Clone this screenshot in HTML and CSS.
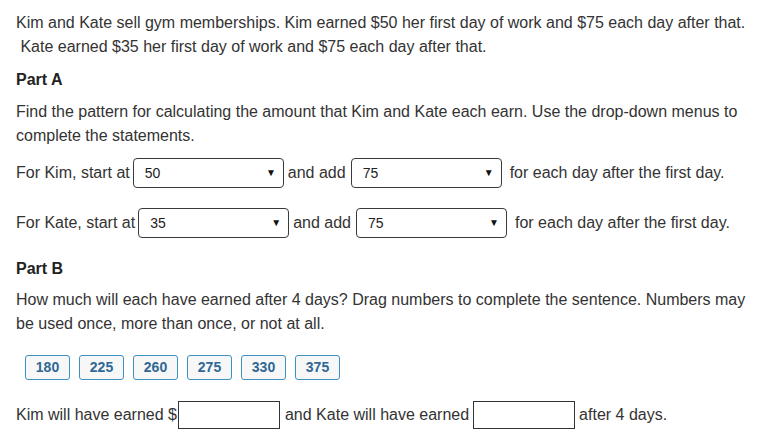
FILE: index.html
```html
<!DOCTYPE html>
<html>
<head>
<meta charset="utf-8">
<link rel="stylesheet" href="styles.css">
</head>
<body>
<div class="page">
  <p class="intro">Kim and Kate sell gym memberships. Kim earned $50 her first day of work and $75 each day after that. &nbsp;Kate earned $35 her first day of work and $75 each day after that.</p>
  <h2 class="part part-a">Part A</h2>
  <p class="para">Find the pattern for calculating the amount that Kim and Kate each earn. Use the drop-down menus to complete the statements.</p>
  <div class="row row-kim">
    <span>For Kim, start at</span>
    <div class="dropdown"><span class="val">50</span><span class="arrow">&#9660;</span></div>
    <span>and add</span>
    <div class="dropdown dd-second"><span class="val">75</span><span class="arrow">&#9660;</span></div>
    <span class="tail">for each day after the first day.</span>
  </div>
  <div class="row row-kate">
    <span>For Kate, start at</span>
    <div class="dropdown"><span class="val">35</span><span class="arrow">&#9660;</span></div>
    <span>and add</span>
    <div class="dropdown dd-second"><span class="val">75</span><span class="arrow">&#9660;</span></div>
    <span class="tail">for each day after the first day.</span>
  </div>
  <h2 class="part part-b">Part B</h2>
  <p class="para para-b">How much will each have earned after 4 days? Drag numbers to complete the sentence. Numbers may be used once, more than once, or not at all.</p>
  <div class="tiles">
    <div class="tile">180</div>
    <div class="tile">225</div>
    <div class="tile">260</div>
    <div class="tile">275</div>
    <div class="tile">330</div>
    <div class="tile">375</div>
  </div>
  <div class="row row-answer">
    <span>Kim will have earned $</span>
    <div class="blank blank-kim"></div>
    <span>and Kate will have earned</span>
    <div class="blank blank-kate"></div>
    <span>after 4 days.</span>
  </div>
</div>
</body>
</html>
```
FILE: styles.css
```css
html, body {
  margin: 0;
  padding: 0;
  background: #ffffff;
}
body {
  font-family: "Liberation Sans", Arial, sans-serif;
  font-size: 16px;
  line-height: 24px;
  color: #333333;
}
.page {
  padding: 11px 6px 0 16px;
}
.intro {
  margin: 0;
}
.part {
  margin: 9px 0 0 0;
  font-size: 16px;
  line-height: 24px;
  font-weight: bold;
  color: #222222;
}
.para {
  margin: 8px 0 0 0;
}
.para-b {
  margin-top: 7px;
}
.row {
  display: flex;
  align-items: center;
  height: 32px;
  white-space: nowrap;
}
.row-kim {
  margin-top: 9px;
}
.row-kate {
  margin-top: 18px;
}
.part-b {
  margin-top: 18px;
}
.dropdown {
  box-sizing: border-box;
  width: 151px;
  height: 30px;
  border: 1px solid #3a3a3a;
  border-radius: 4px;
  margin: 0 4px 0 3px;
  padding: 0 7px 0 11px;
  display: flex;
  align-items: center;
  justify-content: space-between;
  font-size: 14px;
  color: #222222;
}
.dd-second {
  margin-left: 5px;
}
.arrow {
  font-size: 10px;
  color: #111111;
}
.tail {
  margin-left: 4px;
}
.tiles {
  display: flex;
  gap: 10px;
  margin-top: 19px;
  padding-left: 9px;
}
.tile {
  box-sizing: border-box;
  width: 45px;
  height: 25px;
  border: 1px solid #3c93c3;
  border-radius: 3px;
  background: #f7f7f7;
  color: #2f6795;
  font-size: 14px;
  font-weight: bold;
  line-height: 23px;
  text-align: center;
}
.tiles .tile + .tile {
  margin-left: -1px;
}
.row-answer {
  margin-top: 19px;
}
.blank {
  box-sizing: border-box;
  width: 102px;
  height: 28px;
  border: 1px solid #333333;
  background: #ffffff;
}
.blank-kim {
  margin: 0 5px 0 1px;
}
.blank-kate {
  margin: 0 4px 0 4px;
}
```
